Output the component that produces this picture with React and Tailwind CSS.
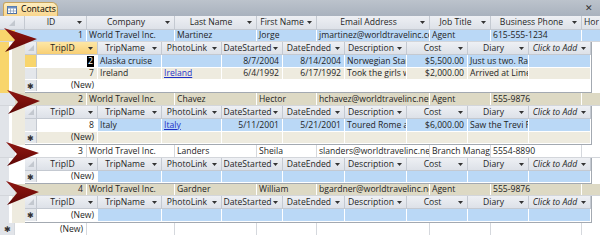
import React from "react";

const MAIN = [
  { w: "w-[62px]", label: "ID" },
  { w: "w-[88px]", label: "Company" },
  { w: "w-[82px]", label: "Last Name" },
  { w: "w-[60px]", label: "First Name" },
  { w: "w-[113px]", label: "Email Address" },
  { w: "w-[61px]", label: "Job Title" },
  { w: "w-[91px]", label: "Business Phone" },
];
const SUB = [
  { w: "w-[61px]", label: "TripID" },
  { w: "w-[64px]", label: "TripName" },
  { w: "w-[60px]", label: "PhotoLink" },
  { w: "w-[61px]", label: "DateStarted" },
  { w: "w-[62px]", label: "DateEnded" },
  { w: "w-[62px]", label: "Description" },
  { w: "w-[61px]", label: "Cost" },
  { w: "w-[61px]", label: "Diary" },
  { w: "w-[62px]", label: "Click to Add", italic: true },
];

const BLUE = "bg-[#bad8f6]";
const TAN = "bg-[#ddd9c4]";
const BEIGE = "bg-[#eeebdf]";

function Drop() {
  return (
    <svg width="5" height="3" viewBox="0 0 5 3" className="shrink-0 mr-[4px]">
      <path d="M0 0h5L2.5 3z" fill="#333" />
    </svg>
  );
}

function HCell({ w, label, italic, active }) {
  return (
    <div
      className={`${w} shrink-0 h-full flex items-center border-r border-[#c4c9d1] ${
        active
          ? "bg-linear-to-b from-[#fde7a6] to-[#f8cf74]"
          : "bg-linear-to-b from-[#eef0f4] to-[#dde1e8]"
      }`}
    >
      <span className={`flex-1 text-center whitespace-nowrap leading-[11px] ${italic ? "italic" : ""}`}>
        {label}
      </span>
      <Drop />
    </div>
  );
}

function Corner({ w }) {
  return (
    <div className={`${w} shrink-0 h-full flex items-end justify-center pb-[3px] border-r border-[#c4c9d1] bg-linear-to-b from-[#eef0f4] to-[#dde1e8]`}>
      <svg width="6" height="6" viewBox="0 0 6 6">
        <path d="M6 0V6H0z" fill="#c3c8cf" />
      </svg>
    </div>
  );
}

function Cell({ w, children, right, bg, link, border = "border-[#ffffff]" }) {
  return (
    <div
      className={`${w} shrink-0 h-full flex items-center overflow-hidden whitespace-nowrap leading-[11px] border-r ${border} ${bg} ${
        right ? "justify-end pr-[3px]" : "pl-[2px]"
      }`}
    >
      {link ? <span className="text-[#1f31c7] underline">{children}</span> : children}
    </div>
  );
}

function MainRow({ h, bg, sel, values, border }) {
  return (
    <div className={`flex ${h} shrink-0 border-b border-[#d3d6db]`}>
      <div className={`w-[15px] shrink-0 h-full ${sel}`} />
      <div className={`w-[10px] shrink-0 h-full ${bg}`} />
      {MAIN.map((c, i) => (
        <Cell key={i} w={c.w} bg={bg} right={i === 0} border={border}>
          {values[i]}
        </Cell>
      ))}
      <div className={`flex-1 h-full ${bg}`} />
    </div>
  );
}

function SubRow({ h, bg, sel, values, first, edit, link, newRow }) {
  return (
    <div className={`flex ${h} shrink-0 border-b border-[#ffffff]`}>
      <div className={`w-[12px] shrink-0 h-full border-r border-[#c4c9d1] flex items-center justify-center ${sel}`}>
        {newRow ? <span className="text-[8px] leading-[10px] text-[#333]">✱</span> : null}
      </div>
      {SUB.map((c, i) => {
        const right = i === 0 || i === 3 || i === 4 || i === 6;
        let cellBg = bg;
        if (i === 0 && first) cellBg = "bg-white";
        let content = values[i];
        if (i === 0 && edit) {
          content = <span className="bg-black text-white px-[1px]">{values[0]}</span>;
        }
        return (
          <Cell key={i} w={c.w} bg={cellBg} right={right} link={link && i === 2}>
            {content}
          </Cell>
        );
      })}
    </div>
  );
}

function SubSheet({ sel, gut, active, rows }) {
  return (
    <div className="flex shrink-0">
      <div className={`w-[9px] shrink-0 ${sel}`} />
      <div className="w-[3px] shrink-0 bg-white" />
      <div className={`w-[13px] shrink-0 ${gut}`} />
      <div className="w-[567px] shrink-0 flex flex-col border-r border-[#a3a9b1] border-b">
        <div className="flex h-[13px] shrink-0 border-b border-[#c4c9d1]">
          <Corner w="w-[12px]" />
          {SUB.map((c, i) => (
            <HCell key={i} {...c} active={active && i === 0} />
          ))}
        </div>
        {rows}
      </div>
      <div className="flex-1 bg-white" />
    </div>
  );
}

function Arrow({ className }) {
  return (
    <svg width="34" height="24" viewBox="0 0 34 24" className={`absolute ${className}`}>
      <defs>
        <linearGradient id="ag" x1="0" y1="0" x2="0" y2="1">
          <stop offset="0" stopColor="#8c1712" />
          <stop offset="0.5" stopColor="#7a0f0b" />
          <stop offset="1" stopColor="#5a0806" />
        </linearGradient>
      </defs>
      <path d="M1 0 L34 11 L2 24 L12 12 Z" fill="url(#ag)" />
    </svg>
  );
}

export default function App() {
  return (
    <div className="w-[600px] h-[237px] overflow-hidden bg-white relative flex flex-col font-['Open_Sans',sans-serif] text-[8.6px] leading-[11px] text-[#1e1e1e]">
      {/* tab bar */}
      <div className="h-[16px] shrink-0 bg-linear-to-b from-[#bcc3cc] to-[#a9b2be] flex items-end pl-[3px] pr-[7px]">
        <div className="h-[14px] w-[55px] rounded-tl-[3px] rounded-tr-[6px] bg-linear-to-b from-[#fdedbf] to-[#f9d68d] border border-b-0 border-[#c8a45e] flex items-center gap-[4px] pl-[3px]">
          <svg width="10" height="8" viewBox="0 0 10 8">
            <rect x="0.5" y="0.5" width="9" height="7" fill="#fff" stroke="#4a6fa5" />
            <rect x="0.5" y="0.5" width="9" height="2" fill="#6d8fc0" />
            <path d="M0.5 5h9M3.5 2.5v5M6.5 2.5v5" stroke="#7d93b3" strokeWidth="0.7" />
          </svg>
          <span className="text-[8.6px] text-black">Contacts</span>
        </div>
        <span className="ml-auto self-center text-[9px] leading-[12px] text-[#333]">✕</span>
      </div>

      {/* main header */}
      <div className="flex h-[14px] shrink-0 border-b border-[#c4c9d1]">
        <Corner w="w-[25px]" />
        {MAIN.map((c, i) => (
          <HCell key={i} {...c} />
        ))}
        <div className="flex-1 h-full flex items-center pl-[2px] bg-linear-to-b from-[#eef0f4] to-[#dde1e8] overflow-hidden whitespace-nowrap">
          Hor
        </div>
      </div>

      <MainRow
        h="h-[12px]"
        bg={BLUE}
        sel="bg-[#f8d56c]"
        values={["1", "World Travel Inc.", "Martinez", "Jorge", "jmartinez@worldtravelinc.com", "Agent", "615-555-1234"]}
      />
      <SubSheet
        sel="bg-[#f8d56c]"
        gut="bg-[#e6e2d2]"
        active
        rows={
          <>
            <SubRow h="h-[13px]" bg={BLUE} sel="bg-[#f8d56c]" first edit
              values={["2", "Alaska cruise", "", "8/7/2004", "8/14/2004", "Norwegian Star cruise", "$5,500.00", "Just us two. Rained", ""]} />
            <SubRow h="h-[12px]" bg={BEIGE} sel="bg-[#e4e7eb]" link
              values={["7", "Ireland", "Ireland", "6/4/1992", "6/17/1992", "Took the girls with us", "$2,000.00", "Arrived at Limerick", ""]} />
            <SubRow h="h-[12px]" bg="bg-white" sel="bg-[#e4e7eb]" newRow
              values={["(New)", "", "", "", "", "", "", "", ""]} />
          </>
        }
      />

      <MainRow
        h="h-[13px]"
        bg={TAN}
        sel="bg-[#e1e4e9]"
        values={["2", "World Travel Inc.", "Chavez", "Hector", "hchavez@worldtravelinc.net", "Agent", "555-9876"]}
      />
      <SubSheet
        sel="bg-[#e1e4e9]"
        gut={BEIGE}
        rows={
          <>
            <SubRow h="h-[13px]" bg={BLUE} sel="bg-[#e4e7eb]" first link
              values={["8", "Italy", "Italy", "5/11/2001", "5/21/2001", "Toured Rome and Florence", "$6,000.00", "Saw the Trevi Fountain", ""]} />
            <SubRow h="h-[12px]" bg={BEIGE} sel="bg-[#e4e7eb]" newRow
              values={["(New)", "", "", "", "", "", "", "", ""]} />
          </>
        }
      />

      <MainRow
        h="h-[13px]"
        bg="bg-white"
        sel="bg-[#e1e4e9]"
        border="border-[#d5d8dd]"
        values={["3", "World Travel Inc.", "Landers", "Sheila", "slanders@worldtravelinc.net", "Branch Manager", "5554-8890"]}
      />
      <SubSheet
        sel="bg-[#e1e4e9]"
        gut="bg-white"
        rows={
          <SubRow h="h-[12px]" bg={BLUE} sel="bg-[#e4e7eb]" first newRow
            values={["(New)", "", "", "", "", "", "", "", ""]} />
        }
      />

      <MainRow
        h="h-[12px]"
        bg={TAN}
        sel="bg-[#e1e4e9]"
        values={["4", "World Travel Inc.", "Gardner", "William", "bgardner@worldtravelinc.net", "Agent", "555-9876"]}
      />
      <SubSheet
        sel="bg-[#e1e4e9]"
        gut={BEIGE}
        rows={
          <SubRow h="h-[13px]" bg={BLUE} sel="bg-[#e4e7eb]" first newRow
            values={["(New)", "", "", "", "", "", "", "", ""]} />
        }
      />

      <div className="flex h-[12px] shrink-0">
        <div className="w-[15px] shrink-0 h-full bg-[#e1e4e9] border-r border-[#d5d8dd] flex items-center justify-center">
          <span className="text-[8px] leading-[10px] text-[#333]">✱</span>
        </div>
        <div className="w-[10px] shrink-0" />
        {MAIN.map((c, i) => (
          <Cell key={i} w={c.w} bg="bg-white" right={i === 0} border="border-[#d5d8dd]">
            {i === 0 ? "(New)" : ""}
          </Cell>
        ))}
      </div>

      <Arrow className="left-[3px] top-[28px]" />
      <Arrow className="left-[6px] top-[90px]" />
      <Arrow className="left-[5px] top-[142px]" />
      <Arrow className="left-[5px] top-[181px]" />
    </div>
  );
}
